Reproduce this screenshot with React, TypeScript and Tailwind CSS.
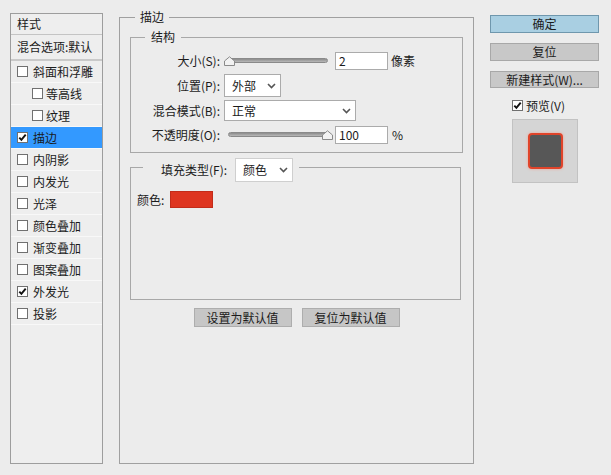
import React from "react";

function Box({ checked }: { checked?: boolean }) {
  return (
    <svg width="11" height="11" viewBox="0 0 11 11" className="shrink-0">
      <rect x="0.5" y="0.5" width="10" height="10" fill="#fff" stroke="#707070" />
      {checked && (
        <path d="M2.3 5.6 L4.4 7.9 L8.7 2.6" fill="none" stroke="#111" strokeWidth="1.9" />
      )}
    </svg>
  );
}

function Chevron() {
  return (
    <svg width="9" height="6" viewBox="0 0 9 6" className="shrink-0">
      <path d="M1 1 L4.5 4.5 L8 1" fill="none" stroke="#555" strokeWidth="1.6" />
    </svg>
  );
}

function Thumb() {
  return (
    <svg width="11" height="10" viewBox="0 0 11 10">
      <path d="M0.5 9.5 L0.5 5 L5.5 0.8 L10.5 5 L10.5 9.5 Z" fill="#f2f2f2" stroke="#8a8a8a" />
    </svg>
  );
}

const items: { t: string; sub?: boolean; checked?: boolean; active?: boolean }[] = [
  { t: "斜面和浮雕" },
  { t: "等高线", sub: true },
  { t: "纹理", sub: true },
  { t: "描边", checked: true, active: true },
  { t: "内阴影" },
  { t: "内发光" },
  { t: "光泽" },
  { t: "颜色叠加" },
  { t: "渐变叠加" },
  { t: "图案叠加" },
  { t: "外发光", checked: true },
  { t: "投影" },
];

export default function App() {
  return (
    <div className="w-[611px] h-[475px] bg-[#ececec] flex items-start text-[12px] leading-[16px] text-[#1b1b1b] font-['Noto_Sans_CJK_SC','Microsoft_YaHei',sans-serif] overflow-hidden">
      {/* Left styles list */}
      <div className="ml-[10px] mt-[13px] w-[93px] h-[451px] border border-[#9d9d9d] bg-[#eeeeee] flex flex-col">
        <div className="h-[21px] border-b border-[#c4c4c4] flex items-center pl-[6px]">样式</div>
        <div className="h-[26px] border-b-2 border-[#c9c9c9] flex items-center pl-[6px] whitespace-nowrap">
          混合选项:默认
        </div>
        {items.map((it) => (
          <div
            key={it.t}
            className={`h-[22px] flex items-center border-b border-[#f8f8f8] whitespace-nowrap ${
              it.sub ? "pl-[21px] gap-[3px]" : "pl-[6px] gap-[5px]"
            } ${it.active ? "bg-[#3399ff]" : ""}`}
          >
            <Box checked={it.checked} />
            <span>{it.t}</span>
          </div>
        ))}
      </div>

      {/* Main stroke panel */}
      <fieldset className="ml-[16px] mt-[9px] w-[355px] h-[455px] border border-[#a0a0a0] px-[10px]">
        <legend className="ml-[5px] px-[5px] leading-[16px]">描边</legend>

        <fieldset className="mt-[4px] h-[124px] border border-[#a8a8a8]">
          <legend className="ml-[14px] px-[6px] leading-[16px]">结构</legend>
          <div className="pt-[6px] flex flex-col">
            {/* size */}
            <div className="h-[20px] flex items-center">
              <div className="w-[89px] text-right whitespace-nowrap">大小(S):</div>
              <div className="relative ml-[4px] w-[105px] h-[10px]">
                <div className="absolute left-[2px] right-[1px] top-[2px] h-[5px] rounded-full bg-gradient-to-b from-[#8c8c8c] to-[#b9b9b9] border border-[#8a8a8a]" />
                <div className="absolute left-0 top-0 flex">
                  <Thumb />
                </div>
              </div>
              <div className="ml-[6px] w-[53px] h-[18px] bg-white border border-[#ababab] flex items-center pl-[3px]">2</div>
              <span className="ml-[3px]">像素</span>
            </div>
            {/* position */}
            <div className="mt-[3px] h-[23px] flex items-center">
              <div className="w-[89px] text-right whitespace-nowrap">位置(P):</div>
              <div className="ml-[4px] w-[57px] h-[23px] bg-white border border-[#ababab] flex items-center justify-between pl-[7px] pr-[4px]">
                <span>外部</span>
                <Chevron />
              </div>
            </div>
            {/* blend mode */}
            <div className="mt-[3px] h-[21px] flex items-center">
              <div className="w-[89px] text-right whitespace-nowrap">混合模式(B):</div>
              <div className="ml-[4px] w-[132px] h-[21px] bg-white border border-[#ababab] flex items-center justify-between pl-[7px] pr-[4px]">
                <span>正常</span>
                <Chevron />
              </div>
            </div>
            {/* opacity */}
            <div className="mt-[4px] h-[19px] flex items-center">
              <div className="w-[89px] text-right whitespace-nowrap">不透明度(O):</div>
              <div className="relative ml-[7px] w-[106px] h-[10px]">
                <div className="absolute left-[1px] right-[4px] top-[2px] h-[5px] rounded-full bg-gradient-to-b from-[#8c8c8c] to-[#b9b9b9] border border-[#8a8a8a]" />
                <div className="absolute right-0 top-0 flex">
                  <Thumb />
                </div>
              </div>
              <div className="ml-[2px] w-[53px] h-[18px] bg-white border border-[#ababab] flex items-center pl-[3px]">100</div>
              <span className="ml-[4px]">%</span>
            </div>
          </div>
        </fieldset>

        <fieldset className="mt-[5px] mr-[2px] h-[142px] border border-[#a8a8a8]">
          <legend className="ml-[12px] pl-[18px] pr-[6px]">
            <div className="flex items-start h-[18px]">
              <span className="mt-[4px] whitespace-nowrap">填充类型(F):</span>
              <div className="ml-[8px] w-[58px] h-[24px] shrink-0 bg-white border border-[#cfcfcf] flex items-center justify-between pl-[7px] pr-[4px]">
                <span>颜色</span>
                <Chevron />
              </div>
            </div>
          </legend>
          <div className="pt-[15px] pl-[6px] flex items-center">
            <span>颜色:</span>
            <div className="ml-[6px] w-[43px] h-[17px] bg-[#de3520] border border-[#c22c1a]" />
          </div>
        </fieldset>

        <div className="mt-[8px] flex justify-center gap-[10px]">
          <div className="w-[98px] h-[19px] bg-[#c6c6c6] border border-[#adadad] flex items-center justify-center">设置为默认值</div>
          <div className="w-[98px] h-[19px] bg-[#c6c6c6] border border-[#adadad] flex items-center justify-center">复位为默认值</div>
        </div>
      </fieldset>

      {/* Right column */}
      <div className="ml-[16px] mt-[15px] w-[109px] flex flex-col">
        <div className="h-[18px] bg-[#a9cfe2] border border-[#6f97ad] flex items-center justify-center">确定</div>
        <div className="mt-[10px] h-[18px] bg-[#c8c8c8] border border-[#a8a8a8] flex items-center justify-center">复位</div>
        <div className="mt-[10px] h-[17px] bg-[#c8c8c8] border border-[#a8a8a8] flex items-center justify-center whitespace-nowrap">
          新建样式(W)...
        </div>
        <div className="mt-[12px] h-[11px] pl-[22px] flex items-center gap-[3px]">
          <Box checked />
          <span className="whitespace-nowrap">预览(V)</span>
        </div>
        <div className="mt-[8px] ml-[22px] w-[66px] h-[64px] bg-[#d5d5d5] border border-[#c2c2c2] flex items-center justify-center">
          <div className="w-[35px] h-[36px] bg-[#575757] border-2 border-[#e0442a] rounded-[4px] shadow-[0_0_3px_#f3a092]" />
        </div>
      </div>
    </div>
  );
}
